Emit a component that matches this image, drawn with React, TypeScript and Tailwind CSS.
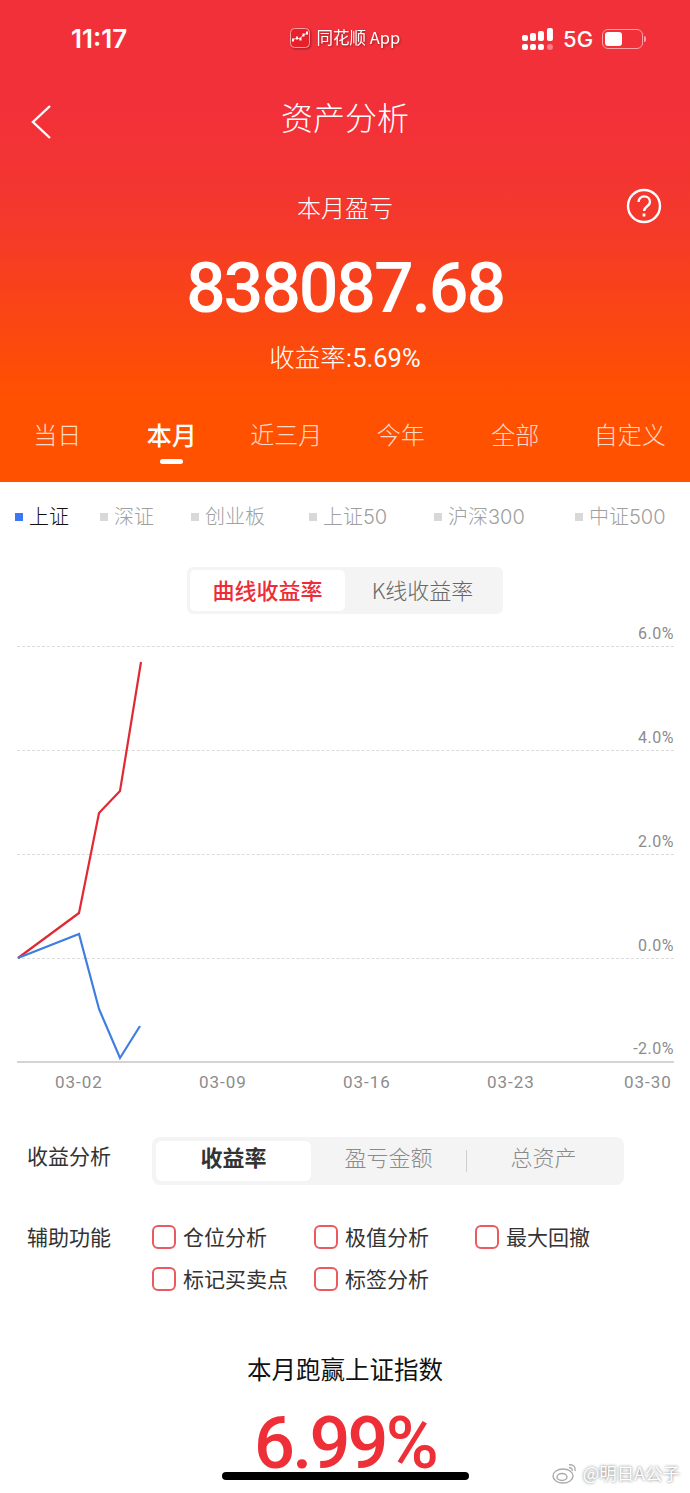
import React from 'react';

const cjk = { fontFamily: '"Noto Sans CJK SC", sans-serif' };
const mixed = { fontFamily: 'Inter, "Noto Sans CJK SC", sans-serif' };

const periods = ['当日', '本月', '近三月', '今年', '全部', '自定义'];
const indexes = [
  { name: '上证', w: 'w-[85px]' },
  { name: '深证', w: 'w-[91px]' },
  { name: '创业板', w: 'w-[118px]' },
  { name: '上证50', w: 'w-[125px]' },
  { name: '沪深300', w: 'w-[141px]' },
  { name: '中证500', w: 'w-[100px]' },
];
const yLabels = ['6.0%', '4.0%', '2.0%', '0.0%', '-2.0%'];
const xLabels = [
  { text: '03-02', w: 'w-[144px]' },
  { text: '03-09', w: 'w-[144px]' },
  { text: '03-16', w: 'w-[144px]' },
  { text: '03-23', w: 'w-[137px]' },
  { text: '03-30', w: 'w-[50px]' },
];

const StatusBar = () => (
  <div className="flex h-[78px] items-center pl-[71px] pr-[44px] text-white">
    <span className="w-[210px] font-['Inter',sans-serif] text-[26px] font-semibold leading-none">11:17</span>
    <div className="mb-[3px] flex w-[242px] items-center gap-[7px] pl-[9px] drop-shadow-[1px_1px_1px_rgba(0,0,0,0.35)]">
      <svg width="20" height="20" viewBox="0 0 20 20">
        <rect x="0.5" y="0.5" width="19" height="19" rx="4" fill="#e8202c" stroke="#f8a0a0" />
        <path d="M2 12 L7 10 L10 11 L13 7 L18 5" stroke="#ffd0d0" strokeWidth="1" fill="none" />
        <g fill="#fff">
          <rect x="2" y="10.5" width="2" height="3" />
          <rect x="6" y="8.5" width="2" height="3" />
          <rect x="9.5" y="9.5" width="2" height="3" />
          <rect x="12.5" y="5.5" width="2" height="3" />
          <rect x="16" y="3.5" width="2" height="3" />
        </g>
      </svg>
      <span className="text-[16.5px] leading-none" style={cjk}>同花顺 App</span>
    </div>
    <svg className="mr-[9px]" width="32" height="22" viewBox="0 0 32 22">
      <g fill="#fff">
        <rect x="0" y="7" width="6" height="6" rx="2" />
        <rect x="0" y="16" width="6" height="6" rx="2" />
        <rect x="8" y="5" width="6" height="8" rx="2" />
        <rect x="8" y="16" width="6" height="6" rx="2" />
        <rect x="16" y="3" width="6" height="10" rx="2" />
        <rect x="16" y="16" width="6" height="6" rx="2" />
        <rect x="25" y="0" width="6" height="13" rx="2" />
      </g>
      <rect x="25" y="16" width="6" height="6" rx="3" fill="#f8808a" />
    </svg>
    <span className="mr-[9px] font-['Inter',sans-serif] text-[22px] font-medium leading-none">5G</span>
    <div className="flex h-[20px] w-[41px] items-center rounded-[6px] border-[1.5px] border-[#ffa0a6] p-[2px]">
      <div className="h-full w-[17px] rounded-[3px] bg-white" />
    </div>
    <div className="ml-[1px] h-[6px] w-[2px] rounded-r bg-[#ffa0a6]" />
  </div>
);

const Header = () => (
  <div className="flex h-[482px] flex-col bg-linear-to-b/srgb from-[#f2303a] from-[22%] via-[#f4382c] via-[45%] to-[#ff5100] to-[83%] text-white">
    <StatusBar />
    <div className="flex h-[80px] items-center px-[31px] pb-[4px]">
      <svg width="20" height="34" viewBox="0 0 20 34" className="mt-[12px] shrink-0">
        <path d="M19 1 L2 17 L19 33" fill="none" stroke="#fff" strokeWidth="2.4" />
      </svg>
      <h1 className="flex-1 pr-[20px] text-center text-[32px] font-light leading-none" style={cjk}>资产分析</h1>
    </div>
    <div className="relative mt-[18px] text-center text-[24px] font-light leading-[62px]" style={cjk}>
      本月盈亏
      <svg className="absolute right-[28px] top-[12px]" width="36" height="36" viewBox="0 0 36 36">
        <circle cx="18" cy="18" r="16" fill="none" stroke="#fff" strokeWidth="2.4" />
        <path d="M12.5 14 C12.5 6.5 24 6.5 24 14 C24 18 18 18.5 18 23" fill="none" stroke="#fff" strokeWidth="2.4" />
        <rect x="16.6" y="25.5" width="2.8" height="3" fill="#fff" />
      </svg>
    </div>
    <div className="mt-[15px] text-center font-['Roboto',sans-serif] text-[70px] font-medium leading-[70px] tracking-[-2.2px]">838087.68</div>
    <div className="mt-[17px] text-center text-[25.5px] font-light leading-[32px]" style={cjk}>
      收益率:<span className="font-['Roboto',sans-serif] font-normal">5.69%</span>
    </div>
    <div className="mt-[43px] grid grid-cols-6 pr-[3px]">
      {periods.map((p) => (
        <div key={p} className="flex flex-col items-center">
          <span className={`leading-[34px] ${p === '本月' ? 'text-[25px] font-medium text-white' : 'text-[24px] font-light text-[#ffd9c8]'}`} style={cjk}>
            {p}
          </span>
          {p === '本月' && <div className="mt-[8px] h-[5px] w-[23px] rounded-full bg-white" />}
        </div>
      ))}
    </div>
  </div>
);

const IndexTabs = () => (
  <div className="flex h-[68px] items-center pl-[15px] pt-[1px]" style={mixed}>
    {indexes.map((it, i) => (
      <div key={it.name} className={`flex items-center gap-[6px] ${it.w}`}>
        <div className={`h-[8px] w-[8px] ${i === 0 ? 'bg-[#3b78f5]' : 'bg-[#d8d8d8]'}`} />
        <span className={`whitespace-nowrap text-[20px] font-light leading-none ${i === 0 ? 'text-[#111]' : 'text-[#a0a0a0]'}`}>{it.name}</span>
      </div>
    ))}
  </div>
);

const Chart = () => (
  <div className="relative mx-[17px] mt-[1px] w-[657px]">
    {yLabels.map((l, i) => (
      <div
        key={l}
        className={`flex flex-col justify-end text-right ${i === 0 ? 'h-[32px]' : 'h-[104px]'} ${
          i === 4 ? 'border-b-2 border-[#d4d4d4]' : 'border-b border-dashed border-[#dcdcdc]'
        }`}
      >
        <span className="pb-[3px] font-['Roboto',sans-serif] text-[16px] leading-[18px] tracking-[0.5px] text-[#8c8c8c]">{l}</span>
      </div>
    ))}
    <svg className="absolute left-0 top-0" width="130" height="460" viewBox="0 0 130 460">
      <polyline points="1,343 62,298 82,198 103,176 124,47" fill="none" stroke="#e02a33" strokeWidth="2.2" />
      <polyline points="1,343 62,319 82,394 103,443 123,411" fill="none" stroke="#3f7ee0" strokeWidth="2.2" />
    </svg>
  </div>
);

const XAxis = () => (
  <div className="ml-[55px] mt-[8px] flex h-[24px] items-center whitespace-nowrap font-['Roboto',sans-serif] text-[17px] tracking-[1px] text-[#8c8c8c]">
    {xLabels.map((x) => (
      <span key={x.text} className={`shrink-0 ${x.w}`}>{x.text}</span>
    ))}
  </div>
);

const Check = ({ label, w }: { label: string; w: string }) => (
  <div className={`flex items-center gap-[7px] ${w}`}>
    <div className="h-[24px] w-[24px] rounded-[6px] border-2 border-[#ea5a60]" />
    <span className="whitespace-nowrap pb-[2px] text-[21px] leading-none text-[#333]">{label}</span>
  </div>
);

export default function App() {
  return (
    <div className="relative h-[1493px] w-[690px] overflow-hidden bg-white">
      <Header />
      <IndexTabs />
      <div className="mt-[17px] flex justify-center" style={cjk}>
        <div className="flex h-[47px] w-[316px] items-center rounded-[6px] bg-[#f4f4f4] p-[3px]">
          <div className="flex h-full w-[155px] items-center justify-center rounded-[5px] bg-white pb-[2px] text-[22px] font-medium text-[#ee2b36]">曲线收益率</div>
          <div className="flex-1 pb-[2px] text-center text-[22px] font-light text-[#666]">K线收益率</div>
        </div>
      </div>
      <Chart />
      <XAxis />
      <div className="mt-[42px] flex items-center px-[27px]" style={cjk}>
        <span className="w-[125px] pb-[12px] text-[21px] leading-none text-[#333]">收益分析</span>
        <div className="flex h-[48px] w-[472px] items-center rounded-[8px] bg-[#f4f4f4] p-[4px]">
          <div className="flex h-full w-[155px] items-center justify-center rounded-[6px] bg-white pb-[10px] text-[22px] font-bold text-[#333]">收益率</div>
          <div className="flex-1 pb-[10px] text-center text-[22px] font-light text-[#8a8a8a]">盈亏金额</div>
          <div className="h-[22px] w-px bg-[#cfcfcf]" />
          <div className="w-[153px] pb-[10px] text-center text-[22px] font-light text-[#8a8a8a]">总资产</div>
        </div>
      </div>
      <div className="mt-[40px] flex px-[27px]" style={cjk}>
        <span className="w-[125px] pt-[1px] text-[21px] leading-none text-[#333]">辅助功能</span>
        <div className="flex w-[480px] flex-wrap gap-y-[18px]">
          <Check label="仓位分析" w="w-[162px]" />
          <Check label="极值分析" w="w-[161px]" />
          <Check label="最大回撤" w="w-[150px]" />
          <Check label="标记买卖点" w="w-[162px]" />
          <Check label="标签分析" w="w-[161px]" />
        </div>
      </div>
      <div className="mt-[62px] text-center text-[24.5px] leading-[32px] text-[#111]" style={cjk}>本月跑赢上证指数</div>
      <div className="mt-[24px] text-center font-['Roboto',sans-serif] text-[72px] font-medium leading-[70px] tracking-[-2.8px] text-[#ee2f38]">6.99%</div>
      {/* home bar + watermark lie over the page */}
      <div className="absolute bottom-[13px] left-[222px] h-[8px] w-[247px] rounded-full bg-black" />
      <div className="absolute bottom-[7px] right-[10px] flex items-center gap-[5px] text-[17.5px] text-white [text-shadow:0_0_3px_#666]" style={cjk}>
        <svg width="26" height="22" viewBox="0 0 26 22" fill="none" stroke="#aaa" strokeWidth="1.4">
          <ellipse cx="11" cy="14" rx="10" ry="7" />
          <ellipse cx="10" cy="15" rx="5" ry="3.5" />
          <path d="M17 3 C21 2 24 5 23 9 M17 6 C19 5 21 7 20 9" />
        </svg>
        @明日A公子
      </div>
    </div>
  );
}
